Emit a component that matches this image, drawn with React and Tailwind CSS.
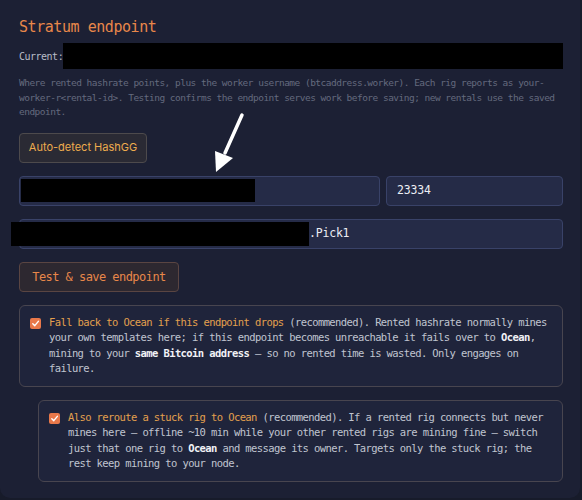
const mono = { fontFamily: '"DejaVu Sans Mono", "Liberation Mono", monospace' };

const Check = () => (
  <span className="mt-[3px] flex h-[11px] w-[11px] shrink-0 items-center justify-center rounded-[2px] bg-[#e8784a]">
    <svg width="9" height="9" viewBox="0 0 10 10" fill="none">
      <path d="M2 5.2 L4.2 7.4 L8.2 2.6" stroke="#ffffff" strokeWidth="1.6" strokeLinecap="round" strokeLinejoin="round" />
    </svg>
  </span>
);

const Arrow = () => (
  <svg className="pointer-events-none absolute left-0 top-0" width="582" height="200" viewBox="0 0 582 200">
    <line x1="242" y1="115" x2="225" y2="153" stroke="#ffffff" strokeWidth="3.5" strokeLinecap="round" />
    <polygon points="216,172 215,151 233,158" fill="#ffffff" />
  </svg>
);

export default function App() {
  return (
    <div className="h-[500px] w-[582px] overflow-hidden bg-[#171b2a]">
      <div className="relative w-[580px] rounded-b-[10px] bg-[#1c2034] pl-[19px] pr-[17px] pb-[16px] pt-[16px]">
        <h2
          className="text-[15px] leading-[22px] tracking-[-0.45px] text-[#e8874a]"
          style={mono}
        >
          Stratum endpoint
        </h2>
        <div className="mt-[5px] flex items-center" style={mono}>
          <span className="text-[10px] tracking-[-0.5px] text-[#b9bdc9]">Current:</span>
          <div className="ml-[-0.5px] h-[26px] w-[505px] bg-black"></div>
        </div>
        <p
          className="mt-[7px] text-[9.5px] leading-[14.5px] tracking-[-0.52px] text-[#646a7e]"
          style={mono}
        >
          Where rented hashrate points, plus the worker username (btcaddress.worker). Each rig reports as your-worker-r&lt;rental-id&gt;. Testing confirms the endpoint serves work before saving; new rentals use the saved endpoint.
        </p>
        <button
          className="mt-[13px] flex h-[30px] w-[128px] items-center justify-center rounded-[4px] border border-[#4d4a4c] bg-[#2a2a34] text-[11px] text-[#eeac4e]"
          style={{ fontFamily: 'Inter, "Liberation Sans", sans-serif' }}
        >
          Auto-detect HashGG
        </button>
        <div className="mt-[13px] flex gap-[6px]">
          <div className="flex h-[30px] flex-1 items-center rounded-[4px] border border-[#394268] bg-[#252b47] pl-[1px]">
            <div className="h-[23px] w-[234px] bg-black"></div>
          </div>
          <div
            className="flex h-[30px] w-[177px] items-center rounded-[4px] border border-[#394268] bg-[#252b47] pl-[10px] text-[11.5px] tracking-[-0.2px] text-[#eceef4]"
            style={mono}
          >
            23334
          </div>
        </div>
        <div
          className="mt-[13px] flex h-[30px] items-center rounded-[4px] border border-[#394268] bg-[#252b47] text-[11.5px] tracking-[-0.2px] text-[#eceef4]"
          style={mono}
        >
          <div className="ml-[-9px] h-[24px] w-[298px] bg-black"></div>
          <span>.Pick1</span>
        </div>
        <button
          className="mt-[13px] flex h-[30px] w-[160px] items-center justify-center rounded-[4px] border border-[#5a4542] bg-[#2d2830] text-[12px] tracking-[-0.55px] text-[#e8874a]"
          style={mono}
        >
          Test &amp; save endpoint
        </button>
        <div
          className="mt-[13px] flex gap-[8px] rounded-[6px] border border-[#48454f] bg-[#1f243b] px-[10px] pb-[9px] pt-[9px] text-[10.5px] leading-[15.5px] tracking-[-0.6px] text-[#c0c4d0]"
          style={mono}
        >
          <Check />
          <p>
            <span className="text-[#e3a04e]">Fall back to Ocean if this endpoint drops</span> (recommended). Rented hashrate normally mines your own templates here; if this endpoint becomes unreachable it fails over to <b className="font-semibold text-[#f1f2f6]">Ocean</b>, mining to your <b className="font-semibold text-[#f1f2f6]">same Bitcoin address</b> — so no rented time is wasted. Only engages on failure.
          </p>
        </div>
        <div
          className="ml-[19px] mt-[13px] flex gap-[8px] rounded-[6px] border border-[#48454f] bg-[#1f243b] px-[10px] pb-[9px] pt-[9px] text-[10.5px] leading-[15.5px] tracking-[-0.6px] text-[#c0c4d0]"
          style={mono}
        >
          <Check />
          <p>
            <span className="text-[#e3a04e]">Also reroute a stuck rig to Ocean</span> (recommended). If a rented rig connects but never mines here — offline ~10 min while your other rented rigs are mining fine — switch just that one rig to <b className="font-semibold text-[#f1f2f6]">Ocean</b> and message its owner. Targets only the stuck rig; the rest keep mining to your node.
          </p>
        </div>
        <Arrow />
      </div>
    </div>
  );
}
